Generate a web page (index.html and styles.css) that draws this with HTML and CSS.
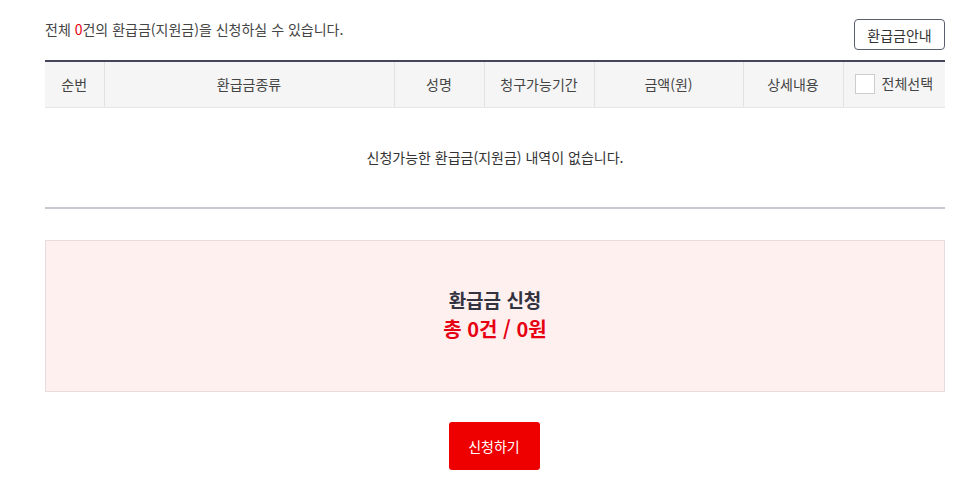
FILE: index.html
```html
<!DOCTYPE html>
<html lang="ko">
<head>
<meta charset="utf-8">
<link rel="stylesheet" href="styles.css">
</head>
<body>
<div class="wrap">
  <div class="top">
    <p class="summary">전체 <span class="red">0</span>건의 환급금(지원금)을 신청하실 수 있습니다.</p>
    <button class="guide">환급금안내</button>
  </div>
  <table class="list">
    <thead>
      <tr>
        <th class="c1">순번</th>
        <th class="c2">환급금종류</th>
        <th class="c3">성명</th>
        <th class="c4">청구가능기간</th>
        <th class="c5">금액(원)</th>
        <th class="c6">상세내용</th>
        <th class="c7"><span class="chk"></span>전체선택</th>
      </tr>
    </thead>
    <tbody>
      <tr><td colspan="7" class="empty">신청가능한 환급금(지원금) 내역이 없습니다.</td></tr>
    </tbody>
  </table>
  <div class="total">
    <div class="total-title">환급금 신청</div>
    <div class="total-sum">총 0건 / 0원</div>
  </div>
  <div class="actions">
    <button class="apply">신청하기</button>
  </div>
</div>
</body>
</html>
```
FILE: styles.css
```css
* { box-sizing: border-box; }
html, body { margin: 0; padding: 0; background: #fff; }
body {
  font-family: "Noto Sans CJK KR", "Noto Sans", sans-serif;
  color: #333;
}
.wrap { width: 900px; margin-left: 45px; }
.top {
  display: flex;
  justify-content: space-between;
  align-items: flex-start;
  height: 60px;
}
.summary {
  margin: 19px 0 0 0;
  font-size: 14px;
  line-height: 20px;
  color: #444;
}
.red { color: #e60012; }
.guide {
  margin-top: 19px;
  width: 91px;
  height: 31px;
  border: 1px solid #5a5e6e;
  border-radius: 4px;
  background: #fff;
  font-family: inherit;
  font-size: 14px;
  color: #333;
  padding: 0;
}
.list {
  width: 900px;
  border-collapse: collapse;
  table-layout: fixed;
  border-top: 2px solid #45455c;
  border-bottom: 2px solid #c9c9d1;
}
.list th {
  background: #f5f5f5;
  height: 46px;
  font-weight: 400;
  font-size: 14px;
  color: #444;
  border-left: 1px solid #e2e2e2;
  border-bottom: 1px solid #e6e6e6;
  padding: 0;
}
.list th:first-child { border-left: 0; }
.c1 { width: 59px; }
.c2 { width: 290px; }
.c3 { width: 90px; }
.c4 { width: 110px; }
.c5 { width: 149px; }
.c6 { width: 100px; }
.c7 { width: 102px; }
.c7 { text-align: left; padding-left: 11px !important; }
.chk {
  display: inline-block;
  width: 20px;
  height: 20px;
  border: 1px solid #ccc;
  background: #fff;
  vertical-align: middle;
  margin-right: 7px;
  position: relative;
  top: -1px;
}
.empty {
  height: 101px;
  text-align: center;
  font-size: 14px;
  color: #333;
  padding: 0 0 1px 0;
}
.total {
  margin-top: 31px;
  height: 152px;
  background: #fff0f0;
  border: 1px solid #e6dcdc;
  display: flex;
  flex-direction: column;
  align-items: center;
  justify-content: center;
  padding-bottom: 2px;
}
.total-title {
  font-size: 19px;
  font-weight: 700;
  color: #33333f;
  line-height: 28px;
}
.total-sum {
  font-size: 20px;
  font-weight: 700;
  color: #e60012;
  line-height: 30px;
  margin-top: 0;
}
.actions {
  display: flex;
  justify-content: center;
  margin-top: 30px;
}
.apply {
  width: 91px;
  height: 48px;
  background: #ee0000;
  color: #fff;
  border: 0;
  border-radius: 3px;
  font-family: inherit;
  font-size: 14px;
  padding: 0;
  margin-right: 2px;
}
```
